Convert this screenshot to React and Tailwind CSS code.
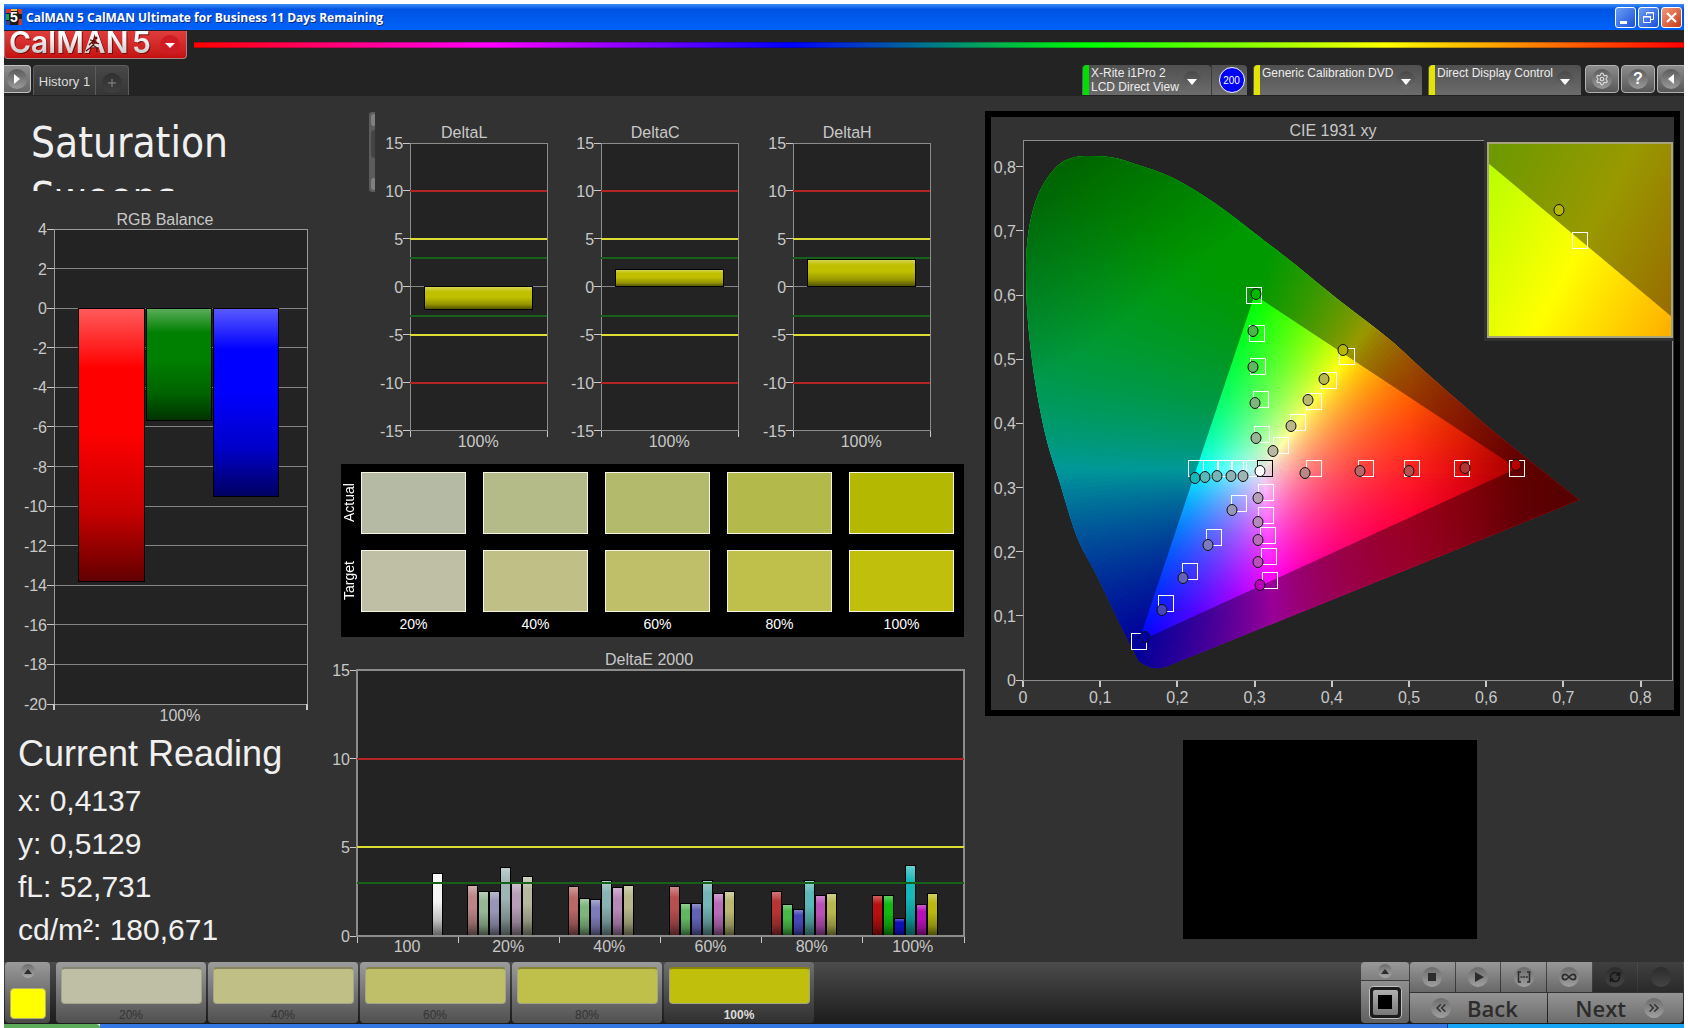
import React from 'react';
import { Settings, RefreshCw, ChevronsLeft, ChevronsRight, Infinity as InfinityIcon } from 'lucide-react';

const LEVELS = ['20%', '40%', '60%', '80%', '100%'];
const ACTUAL = ['#b5baa5', '#b4bb88', '#b3ba6b', '#b3ba4b', '#b4b900'];
const TARGET = ['#bfbfa5', '#c0bf86', '#bfbf6a', '#bfbf4c', '#c0bf0c'];

const READINGS = ['x: 0,4137', 'y: 0,5129', 'fL: 52,731', 'cd/m²: 180,671'];

const DELTA_E = [
    { level: '20%', bars: [[2.86, '#ba8686'], [2.52, '#96b696'], [2.52, '#9696b6'], [3.86, '#9fb4b4'], [3.0, '#b79fb7'], [3.35, '#b8b8a0']] },
    { level: '40%', bars: [[2.79, '#b86868'], [2.13, '#7cb67c'], [2.05, '#7c7cb8'], [3.13, '#8ab4b4'], [2.71, '#b888b8'], [2.86, '#b8b88a']] },
    { level: '60%', bars: [[2.79, '#b84f4f'], [1.85, '#62b662'], [1.85, '#6262b8'], [3.13, '#74b6b6'], [2.37, '#b86cb8'], [2.49, '#b8b870']] },
    { level: '80%', bars: [[2.52, '#b83434'], [1.79, '#46b846'], [1.49, '#4646b8'], [3.13, '#5ab8b8'], [2.3, '#b850b8'], [2.39, '#b8b850']] },
    { level: '100%', bars: [[2.3, '#b81010'], [2.3, '#10b810'], [0.98, '#1010b8'], [3.97, '#14b8b8'], [1.79, '#b810b8'], [2.39, '#b8b810']] },
];

const LIMITS = [
    [10, '#b42424'],
    [5, '#dcdc34'],
    [3, '#16601a'],
];

// gradients that every chart bar shares
const SharedDefs = () => (
    <svg className="absolute size-0" aria-hidden="true">
        <defs>
            <linearGradient id="shade" x1="0" y1="0" x2="0" y2="1">
                <stop offset="0" stopColor="#fff" stopOpacity="0.36" />
                <stop offset="0.22" stopColor="#fff" stopOpacity="0" />
                <stop offset="0.45" stopColor="#000" stopOpacity="0" />
                <stop offset="0.75" stopColor="#000" stopOpacity="0.22" />
                <stop offset="1" stopColor="#000" stopOpacity="0.62" />
            </linearGradient>
        </defs>
    </svg>
);

const Bar = ({ x, y, width, height, color }) => (
    <g shapeRendering="crispEdges">
        <rect x={x} y={y} width={width} height={height} fill={color} />
        <rect x={x} y={y} width={width} height={height} fill="url(#shade)" stroke="#000" strokeWidth="1" />
    </g>
);

const YLabel = ({ x, y, children }) => (
    <g>
        <text x={x - 7} y={y + 6} textAnchor="end" className="fill-[#c8c8c8] text-[16px]">{children}</text>
        <path d={`M${x - 7} ${y}H${x}`} stroke="#c8c8c8" shapeRendering="crispEdges" />
    </g>
);

const RgbBalance = () => {
    const top = 38;
    const unit = 475 / 24;
    const yOf = v => top + (4 - v) * unit;
    const ticks = [];
    for (let v = 4; v >= -20; v -= 2) ticks.push(v);
    return (
        <svg viewBox="0 0 337 536" className="w-full h-auto block" role="img" aria-label="RGB Balance">
            <text x="161" y="34" textAnchor="middle" className="fill-[#c8c8c8] text-[16px]">RGB Balance</text>
            <rect x="50" y={top} width="253" height="475" fill="#232323" />
            {ticks.map(v => (
                <g key={v}>
                    <path d={`M50 ${yOf(v)}H303`} stroke="#848484" shapeRendering="crispEdges" />
                    <YLabel x={50} y={yOf(v)}>{v}</YLabel>
                </g>
            ))}
            <Bar x={74} y={yOf(0)} width={66} height={13.8 * unit} color="#ff0000" />
            <Bar x={142} y={yOf(0)} width={65} height={5.7 * unit} color="#008000" />
            <Bar x={209} y={yOf(0)} width={65} height={9.5 * unit} color="#0000ff" />
            <rect x="50" y={top} width="253" height="475" fill="none" stroke="#9a9a9a" shapeRendering="crispEdges" />
            <path d="M50 513v6M303 513v6" stroke="#c8c8c8" shapeRendering="crispEdges" strokeWidth="2" />
            <text x="176" y="530" textAnchor="middle" className="fill-[#c8c8c8] text-[16px]">100%</text>
        </svg>
    );
};

const DeltaChart = ({ title, value }) => {
    const unit = 287 / 30;
    const yOf = v => 31 + (15 - v) * unit;
    return (
        <svg viewBox="0 0 191 340" className="w-full h-auto block" role="img" aria-label={title}>
            <text x="89" y="26" textAnchor="middle" className="fill-[#c8c8c8] text-[16px]">{title}</text>
            <rect x="35" y="31" width="137" height="287" fill="#232323" />
            {[15, 10, 5, 0, -5, -10, -15].map(v => <YLabel key={v} x={35} y={yOf(v)}>{v}</YLabel>)}
            <path d={`M35 ${yOf(0)}H172`} stroke="#848484" shapeRendering="crispEdges" />
            <rect x="35" y="31" width="137" height="287" fill="none" stroke="#8c8c8c" shapeRendering="crispEdges" />
            {LIMITS.map(([v, color]) => (
                <path key={v} d={`M35 ${yOf(v)}H172M35 ${yOf(-v)}H172`} stroke={color} strokeWidth="2" shapeRendering="crispEdges" />
            ))}
            <Bar x={49} y={yOf(Math.max(value, 0))} width={108} height={Math.abs(value) * unit} color="#c0c000" />
            <path d="M35 318v6M172 318v6" stroke="#c8c8c8" shapeRendering="crispEdges" />
            <text x="103" y="334" textAnchor="middle" className="fill-[#c8c8c8] text-[16px]">100%</text>
        </svg>
    );
};

const DeltaE = () => {
    const unit = 266 / 15;
    const yOf = v => 33 + (15 - v) * unit;
    const step = 607 / 6;
    return (
        <svg viewBox="0 0 623 322" className="w-full h-auto block overflow-visible" role="img" aria-label="DeltaE 2000">
            <text x="308" y="28" textAnchor="middle" className="fill-[#c8c8c8] text-[16px]">DeltaE 2000</text>
            <rect x="16" y="33" width="607" height="266" fill="#232323" />
            {[15, 10, 5, 0].map(v => <YLabel key={v} x={16} y={yOf(v)}>{v}</YLabel>)}
            <Bar x={91} y={yOf(3.52)} width={10} height={3.52 * unit} color="#f4f4f4" />
            {DELTA_E.map((group, g) => group.bars.map(([v, color], i) => (
                <Bar key={`${g}-${i}`} x={126 + Math.round(g * step) + i * 11} y={yOf(v)} width={10} height={v * unit} color={color} />
            )))}
            <rect x="16" y="33" width="607" height="266" fill="none" stroke="#8c8c8c" strokeWidth="2" shapeRendering="crispEdges" />
            {LIMITS.map(([v, color]) => (
                <path key={v} d={`M16 ${yOf(v)}H623`} stroke={color} strokeWidth="2" shapeRendering="crispEdges" />
            ))}
            {[0, 1, 2, 3, 4, 5, 6].map(i => (
                <path key={i} d={`M${16 + i * step} 300v6`} stroke="#c8c8c8" shapeRendering="crispEdges" />
            ))}
            {['100', ...LEVELS].map((label, i) => (
                <text key={label} x={66 + i * step} y="315" textAnchor="middle" className="fill-[#c8c8c8] text-[16px]">{label}</text>
            ))}
        </svg>
    );
};

// plot area of the chromaticity diagram: chart units per unit of x and y
const CIE = { left: 32, bottom: 563, sx: 772, sy: 641.5 };
const cx = x => CIE.left + x * CIE.sx;
const cy = y => CIE.bottom - y * CIE.sy;

const WHITE = [cx(0.3127), cy(0.329)];
const GAMUT = `M${cx(0.3)} ${cy(0.6)}L${cx(0.64)} ${cy(0.33)}L${cx(0.15)} ${cy(0.06)}Z`;

const LOCUS_POINTS = [
    [148, 544], [130, 509], [106, 459], [86, 420], [68, 363], [55, 320], [44, 264], [37, 205], [35, 157],
    [36, 128], [40, 101], [47, 78], [57, 60], [70, 46], [85, 40], [102, 39], [124, 41], [147, 48],
    [182, 61], [225, 87], [279, 128], [301, 145], [349, 184], [398, 222], [440, 260], [508, 319], [588, 383],
];

const smooth = pts => {
    let d = `M${pts[0][0]} ${pts[0][1]}`;
    for (let i = 0; i < pts.length - 1; i++) {
        const p0 = pts[i - 1] || pts[i];
        const p1 = pts[i];
        const p2 = pts[i + 1];
        const p3 = pts[i + 2] || p2;
        d += `C${p1[0] + (p2[0] - p0[0]) / 6} ${p1[1] + (p2[1] - p0[1]) / 6} ${p2[0] - (p3[0] - p1[0]) / 6} ${p2[1] - (p3[1] - p1[1]) / 6} ${p2[0]} ${p2[1]}`;
    }
    return d;
};

const LOCUS = `${smooth(LOCUS_POINTS)}L174 550Q160 554 148 544Z`;

// brightest sRGB mix for a chromaticity, left without gamma
const colorAt = (px, py) => {
    const x = (px - CIE.left) / CIE.sx;
    const y = Math.max((CIE.bottom - py) / CIE.sy, 0.001);
    const X = x / y;
    const Z = (1 - x - y) / y;
    const rgb = [
        3.2406 * X - 1.5372 - 0.4986 * Z,
        -0.9689 * X + 1.8758 + 0.0415 * Z,
        0.0557 * X - 0.204 + 1.057 * Z,
    ].map(c => Math.max(c, 0));
    const max = Math.max(...rgb);
    return `rgb(${rgb.map(c => Math.round((255 * c) / max)).join(',')})`;
};

const RADII = [0, 8, 16, 26, 38, 52, 68, 86, 106, 130, 160, 195, 235, 280, 330, 400];
const WEDGES = Array.from({ length: 240 }, (_, i) => {
    const a = (i * Math.PI) / 120;
    const end = a + Math.PI / 60;
    const [wx, wy] = WHITE;
    return {
        id: `w${i}`,
        d: `M${wx} ${wy}L${wx + 500 * Math.cos(a)} ${wy + 500 * Math.sin(a)}L${wx + 500 * Math.cos(end)} ${wy + 500 * Math.sin(end)}Z`,
        stops: RADII.map(r => [r / 400, colorAt(wx + r * Math.cos(a + 0.013), wy + r * Math.sin(a + 0.013))]),
    };
});

const TARGETS = [
    [263, 178], [266, 216], [267, 249], [270, 282], [271, 317],
    [356, 239], [338, 263], [323, 284], [307, 305], [290, 328],
    [323, 351], [375, 351], [421, 351], [471, 351], [526, 351],
    [205, 351], [220, 351], [234, 351], [248, 351], [260, 351],
    [275, 375], [275, 398], [277, 418], [278, 439], [279, 463],
    [248, 386], [223, 420], [199, 454], [175, 486], [148, 524],
];

const MEASURED = [
    [265, 177, '#00b800'], [262, 214, '#46b846'], [262, 250, '#62b662'], [264, 286, '#7cb67c'], [265, 321, '#96b696'],
    [352, 233, '#b8b800'], [333, 262, '#b8b850'], [317, 283, '#b8b870'], [300, 309, '#b8b88a'], [282, 334, '#b8b8a0'],
    [314, 356, '#ba8686'], [369, 354, '#b86868'], [418, 354, '#b84f4f'], [474, 351, '#b83434'], [525, 348, '#b80000'],
    [204, 361, '#14b8b8'], [214, 360, '#5ab8b8'], [226, 359, '#74b6b6'], [240, 359, '#8ab4b4'], [252, 359, '#9fb4b4'],
    [267, 381, '#b79fb7'], [267, 405, '#b888b8'], [267, 423, '#b86cb8'], [267, 445, '#b850b8'], [269, 468, '#b800b8'],
    [241, 393, '#9696b6'], [217, 428, '#7c7cb8'], [192, 461, '#6262b8'], [171, 493, '#4646b8'], [154, 520, '#0000a0'],
];

const CieInset = () => (
    <g>
        <rect x="493" y="22" width="190" height="202" fill="#323232" />
        <svg x="497" y="26" width="184" height="194" viewBox="0 0 184 194">
            <rect width="184" height="194" fill="url(#inset)" />
            <path d="M0 20L184 174V0H0Z" fill="#000" fillOpacity="0.4" />
            <ellipse cx="71" cy="67" rx="5" ry="5.500" fill="#b8b800" stroke="#111" />
            <rect x="84" y="89" width="15" height="16" fill="none" stroke="#fff" shapeRendering="crispEdges" />
        </svg>
        <rect x="497" y="26" width="184" height="194" fill="none" stroke="#a8a47c" strokeWidth="2" />
    </g>
);

const CieChart = () => (
    <svg viewBox="0 0 683 593" className="w-full h-auto block" role="img" aria-label="CIE 1931 xy">
        <defs>
            <clipPath id="locus"><path d={LOCUS} /></clipPath>
            <linearGradient id="redFade" gradientUnits="userSpaceOnUse" x1={cx(0.5)} y1="0" x2={cx(0.72)} y2="0">
                <stop offset="0" stopColor="#000" stopOpacity="0" />
                <stop offset="0.3" stopColor="#000" stopOpacity="0.12" />
                <stop offset="0.65" stopColor="#000" stopOpacity="0.36" />
                <stop offset="1" stopColor="#000" stopOpacity="0.46" />
            </linearGradient>
            <linearGradient id="greenFade" gradientUnits="userSpaceOnUse" x1={cx(0.2)} y1={cy(0.62)} x2={cx(0.08)} y2={cy(0.82)}>
                <stop offset="0" stopColor="#000" stopOpacity="0" />
                <stop offset="1" stopColor="#000" stopOpacity="0.34" />
            </linearGradient>
            <linearGradient id="inset" gradientUnits="userSpaceOnUse" x1="-21" y1="61" x2="189" y2="176">
                <stop offset="0" stopColor="#b8ff00" />
                <stop offset="0.5" stopColor="#ffff00" />
                <stop offset="1" stopColor="#ffb000" />
            </linearGradient>
            {WEDGES.map(w => (
                <radialGradient key={w.id} id={w.id} gradientUnits="userSpaceOnUse" cx={WHITE[0]} cy={WHITE[1]} r="400">
                    {w.stops.map(([offset, color]) => <stop key={offset} offset={offset} stopColor={color} />)}
                </radialGradient>
            ))}
        </defs>
        <text x="342" y="19" textAnchor="middle" className="fill-[#c8c8c8] text-[16px]">CIE 1931 xy</text>
        <rect x="32" y="23" width="649" height="540" fill="#232323" stroke="#8c8c8c" shapeRendering="crispEdges" />
        <g clipPath="url(#locus)">
            {WEDGES.map(w => <path key={w.id} d={w.d} fill={`url(#${w.id})`} />)}
            <path d={`M0 0H683V593H0Z${GAMUT}`} fill="#000" fillOpacity="0.4" fillRule="evenodd" />
            <rect width="683" height="593" fill="url(#redFade)" />
            <rect width="683" height="593" fill="url(#greenFade)" />
        </g>
        {TARGETS.map(([x, y]) => (
            <rect key={`${x}-${y}`} x={x - 8} y={y - 8} width="15" height="16" fill="none" stroke="#fff" shapeRendering="crispEdges" />
        ))}
        <rect x="266" y="343" width="15" height="16" fill="none" stroke="#000" shapeRendering="crispEdges" />
        {MEASURED.map(([x, y, color]) => (
            <ellipse key={`${x}-${y}`} cx={x} cy={y} rx="5" ry="5.500" fill={color} stroke="#111" />
        ))}
        <ellipse cx="269" cy="354" rx="5" ry="5.500" fill="#fff" stroke="#111" />
        {[0, 1, 2, 3, 4, 5, 6, 7, 8].map(i => {
            const label = i === 0 ? '0' : `0,${i}`;
            return (
                <g key={i}>
                    <YLabel x={32} y={cy(i / 10)}>{label}</YLabel>
                    <path d={`M${cx(i / 10)} 564v6`} stroke="#c8c8c8" strokeWidth="2" shapeRendering="crispEdges" />
                    <text x={cx(i / 10)} y="586" textAnchor="middle" className="fill-[#c8c8c8] text-[16px]">{label}</text>
                </g>
            );
        })}
        <CieInset />
    </svg>
);

const Swatches = () => (
    <div className="mt-[11px] flex h-[173px] bg-black pt-2 pr-2.5 text-sm text-white">
        <div className="flex w-5 flex-col items-start gap-4">
            <span className="h-[62px] rotate-180 text-center leading-4 [writing-mode:vertical-rl]">Actual</span>
            <span className="h-[62px] rotate-180 text-center leading-4 [writing-mode:vertical-rl]">Target</span>
        </div>
        <div className="grid flex-1 grid-cols-5 gap-x-[17px]">
            {LEVELS.map((level, i) => (
                <div key={level} className="flex flex-col text-center">
                    <div className="h-[62px] border border-[#f4f4e0]" style={{ background: ACTUAL[i] }} />
                    <div className="mt-4 h-[62px] border border-[#f4f4e0]" style={{ background: TARGET[i] }} />
                    <span className="mt-0.5 leading-5">{level}</span>
                </div>
            ))}
        </div>
    </div>
);

const TitleBar = () => (
    <div className="flex h-[26px] items-center bg-linear-to-b from-[#3c8cf8] via-[#0054e3] via-20% to-[#0062fa] pr-0.5 pl-0.5">
        <svg viewBox="0 0 16 16" className="size-4" aria-hidden="true">
            <rect width="16" height="16" fill="#1c1c1c" />
            <path d="M0 0h5v4H0z" fill="#e03030" />
            <path d="M5 0h6v2H5z" fill="#e8c060" />
            <path d="M11 0h5v5h-3z" fill="#d04028" />
            <path d="M0 5h3v6H0z" fill="#20a040" />
            <path d="M0 12h4v4H0z" fill="#404080" />
            <path d="M13 10h3v6h-4z" fill="#c03838" />
            <text x="8" y="13" textAnchor="middle" fill="#fff" fontSize="14" fontWeight="700">5</text>
        </svg>
        <h1 className="ml-1 flex-1 pt-px font-['Open_Sans',sans-serif] text-xs font-bold text-white [text-shadow:1px_1px_#0a2a80]">
            CalMAN 5 CalMAN Ultimate for Business 11 Days Remaining
        </h1>
        <div className="flex gap-0.5">
            <button aria-label="Minimize" className="size-[21px] rounded-[3px] border border-white bg-linear-to-br from-[#6a9cf4] to-[#1c4fd8]">
                <svg viewBox="0 0 19 19"><path d="M4 13h7v3H4z" fill="#fff" /></svg>
            </button>
            <button aria-label="Restore" className="size-[21px] rounded-[3px] border border-white bg-linear-to-br from-[#6a9cf4] to-[#1c4fd8]">
                <svg viewBox="0 0 19 19" fill="none" stroke="#fff"><path d="M7.500 7V4.500h7v7H12M7 5h8M4.500 8.500h7v6h-7zM4 9h8" /></svg>
            </button>
            <button aria-label="Close" className="size-[21px] rounded-[3px] border border-white bg-linear-to-br from-[#f09878] to-[#c83410]">
                <svg viewBox="0 0 19 19"><path d="M5 5l9 9M14 5l-9 9" stroke="#fff" strokeWidth="2.200" /></svg>
            </button>
        </div>
    </div>
);

const Logo = () => (
    <button aria-label="CalMAN 5 menu" className="h-7 w-[183px] rounded-b-[4px] border border-t-0 border-[#a88080] bg-linear-to-b from-[#e03c3c] to-[#c41010]">
        <svg viewBox="0 0 181 27" className="block size-full">
            <defs>
                <linearGradient id="chrome" x1="0" y1="0" x2="0" y2="1">
                    <stop offset="0.3" stopColor="#fff" />
                    <stop offset="1" stopColor="#b8b8b8" />
                </linearGradient>
            </defs>
            <g className="font-['Inter',sans-serif] drop-shadow-[1px_1px_0_#7a0c0c]" fontSize="30" fontWeight="600">
                <text x="4" y="22" fill="url(#chrome)">CalMAN</text>
                <text x="127" y="22" fill="url(#chrome)">5</text>
            </g>
            <path d="M85 9l5 1-2 5M88 10l-4 4M88 14l-3 3-4 3M88 14l4 3 0 4M90 11l4 2" fill="none" stroke="#4a1010" strokeWidth="1.200" />
            <circle cx="91" cy="7" r="1.500" fill="#4a1010" />
            <circle cx="165" cy="14" r="10" fill="#cf1c24" />
            <path d="M160 12h10l-5 5z" fill="#fff" />
        </svg>
    </button>
);

const Dial = ({ children, className = 'size-5 from-[#5c5c5c] to-[#9a9a9a]' }) => (
    <span className={`flex shrink-0 items-center justify-center rounded-full bg-linear-to-b ${className}`}>{children}</span>
);

const DropArrow = () => (
    <Dial className="size-[18px] from-[#484848] to-[#6c6c6c]">
        <svg viewBox="0 0 10 6" className="mt-1 h-1.5 w-2.5"><path d="M0 0h10L5 6z" fill="#fff" /></svg>
    </Dial>
);

const DeviceMenu = ({ lines, stripe, className }) => (
    <button className={`flex h-[30px] items-start rounded-t-[4px] bg-linear-to-b from-[#505050] to-[#6c6c6c] pl-px text-left text-xs leading-[14px] text-[#ececec] ${className}`}>
        <span className={`h-full w-1.5 rounded-tl-[4px] ${stripe}`} />
        <span className="ml-0.5 flex-1 pt-px whitespace-nowrap">
            {lines.map(line => <span key={line} className="block">{line}</span>)}
        </span>
        <span className="mt-1.5"><DropArrow /></span>
    </button>
);

const Header = () => (
    <header className="flex h-[66px] flex-col bg-[#232323]">
        <div className="flex items-start pt-px">
            <Logo />
            <div className="mt-[11px] ml-[7px] h-1.5 flex-1 border-y border-black/25 bg-[linear-gradient(to_right,#f00,#f0f,#00f,#0f0,#ff0,#f00)]" />
        </div>
        <div className="mt-1.5 flex items-start">
            <button aria-label="Expand left panel" className="flex h-7 w-[27px] items-center justify-center rounded-r-[4px] border border-l-0 border-[#c0c0c0] bg-linear-to-b from-[#8c8c8c] to-[#686868]">
                <Dial>
                    <svg viewBox="0 0 6 10" className="h-2.5 w-1.5"><path d="M0 0v10l6-5z" fill="#fff" /></svg>
                </Dial>
            </button>
            <div className="ml-0.5 flex h-[30px] w-24 rounded-t-[4px] border border-b-0 border-[#5c5c5c] bg-linear-to-b from-[#484848] to-[#363636]">
                <button className="w-[62px] border-r border-[#5c5c5c] pt-0.5 text-[13px] text-[#dcdcdc]">History 1</button>
                <button aria-label="Add history" className="flex flex-1 items-center justify-center pt-1">
                    <Dial className="size-5 from-[#303030] to-[#404040]">
                        <svg viewBox="0 0 8 8" className="size-2"><path d="M4 0v8M0 4h8" stroke="#8c8c8c" /></svg>
                    </Dial>
                </button>
            </div>
            <div className="ml-auto flex items-start">
                <DeviceMenu lines={['X-Rite i1Pro 2', 'LCD Direct View']} stripe="bg-[#00e000]" className="w-[129px] pr-2.5" />
                <div className="flex h-[30px] w-9 items-center justify-center rounded-tr-[4px] border-l border-[#3c3c3c] bg-linear-to-b from-[#505050] to-[#6c6c6c] pl-1">
                    <span className="flex size-[26px] items-center justify-center rounded-full border border-white bg-[#0000ff] text-[10px] text-white">200</span>
                </div>
                <div className="ml-1.5 flex gap-1.5">
                    <DeviceMenu lines={['Generic Calibration DVD']} stripe="bg-[#e4e400]" className="w-[169px] pr-[7px]" />
                    <DeviceMenu lines={['Direct Display Control']} stripe="bg-[#e4e400]" className="w-[153px] pr-[7px]" />
                </div>
                <div className="ml-1 flex gap-0.5">
                    <button aria-label="Settings" className="flex h-7 w-[34px] items-center justify-center rounded-[4px] border border-[#b0b0b0] bg-linear-to-b from-[#8c8c8c] to-[#585858]">
                        <Dial><Settings size={14} color="#d8d8d8" strokeWidth={2} /></Dial>
                    </button>
                    <button aria-label="Help" className="flex h-7 w-[34px] items-center justify-center rounded-[4px] border border-[#b0b0b0] bg-linear-to-b from-[#8c8c8c] to-[#585858]">
                        <Dial><span className="text-base font-bold text-white">?</span></Dial>
                    </button>
                    <button aria-label="Expand right panel" className="flex h-7 w-[27px] items-center justify-center rounded-l-[4px] border border-r-0 border-[#b0b0b0] bg-linear-to-b from-[#8c8c8c] to-[#585858]">
                        <Dial>
                            <svg viewBox="0 0 6 10" className="h-2.5 w-1.5"><path d="M6 0v10L0 5z" fill="#fff" /></svg>
                        </Dial>
                    </button>
                </div>
            </div>
        </div>
    </header>
);

const UpDial = () => (
    <Dial className="size-3.5 from-[#6c6c6c] to-[#a8a8a8]">
        <svg viewBox="0 0 8 5" className="h-[5px] w-2"><path d="M0 5h8L4 0z" fill="#2c2c2c" /></svg>
    </Dial>
);

const PatternBar = () => (
    <div className="flex gap-1.5">
        <button aria-label="Pattern list" className="flex h-[61px] w-[45px] flex-col items-center rounded-[4px] bg-linear-to-b from-[#9a9a9a] to-[#4a4a4a] pt-0.5">
            <UpDial />
            <span className="mt-2.5 h-[31px] w-9 rounded-[4px] border border-[#b0b070] bg-[#ffff00]" />
        </button>
        <div className="flex gap-0.5">
            {LEVELS.map((level, i) => {
                const active = i === LEVELS.length - 1;
                return (
                    <button
                        key={level}
                        className={`flex h-[61px] w-[150px] flex-col items-center rounded-[4px] bg-linear-to-b pt-[5px] text-xs ${active ? 'from-[#707070] to-[#303030] font-bold text-[#dcdcdc]' : 'from-[#9c9c9c] to-[#505050] text-[#343434]'}`}
                    >
                        <span
                            className="h-[37px] w-[141px] rounded-[4px] border border-t-2 border-[#a4a48c] border-t-black/30"
                            style={{ background: TARGET[i] }}
                        />
                        <span className="mt-1 leading-[14px]">{level}</span>
                    </button>
                );
            })}
        </div>
    </div>
);

const ToolButton = ({ label, dark, children }) => (
    <button
        aria-label={label}
        className={`flex h-[30px] flex-1 items-center justify-center bg-linear-to-b ${dark ? 'from-[#404040] to-[#2a2a2a]' : 'from-[#989898] to-[#686868]'}`}
    >
        <Dial className={dark ? 'size-5 from-[#2c2c2c] to-[#444444]' : 'size-5 from-[#6c6c6c] to-[#a0a0a0]'}>{children}</Dial>
    </button>
);

const Transport = () => (
    <div className="ml-auto flex gap-px pr-px">
        <div className="flex w-12 flex-col gap-px">
            <button aria-label="Window options" className="flex h-[18px] items-center justify-center rounded-t-[4px] bg-linear-to-b from-[#989898] to-[#808080]">
                <UpDial />
            </button>
            <button aria-label="Pattern window" className="flex h-[42px] items-center justify-center rounded-b-[4px] bg-linear-to-b from-[#909090] to-[#606060]">
                <span className="flex size-[33px] items-center justify-center rounded-[4px] border border-[#c0c0c0] bg-[#1c1c1c] p-[3px]">
                    <span className="flex size-full items-center justify-center rounded-[2px] bg-linear-to-b from-[#b0b0b0] to-[#787878]">
                        <span className="size-3.5 bg-black" />
                    </span>
                </span>
            </button>
        </div>
        <div className="flex w-[273px] flex-col gap-px">
            <div className="flex gap-px overflow-hidden rounded-t-[4px]">
                <ToolButton label="Stop"><span className="size-2 bg-[#2c2c2c]" /></ToolButton>
                <ToolButton label="Play">
                    <svg viewBox="0 0 9 10" className="ml-0.5 h-2.5 w-[9px]"><path d="M0 0v10l9-5z" fill="#2c2c2c" /></svg>
                </ToolButton>
                <ToolButton label="Read series">
                    <svg viewBox="0 0 14 12" className="h-3 w-3.5" fill="none" stroke="#2c2c2c">
                        <path d="M4 1H1.500v10H4M10 1h2.500v10H10" strokeWidth="1.600" />
                        <path d="M3.500 6h2M6.200 6h1.800M8.800 6h2" strokeWidth="1.600" />
                    </svg>
                </ToolButton>
                <ToolButton label="Read continuously"><InfinityIcon size={16} color="#2c2c2c" strokeWidth={2.5} /></ToolButton>
                <ToolButton label="Repeat" dark><RefreshCw size={12} color="#161616" strokeWidth={3} /></ToolButton>
                <ToolButton label="Record" dark />
            </div>
            <div className="flex gap-px overflow-hidden rounded-b-[4px] font-['Open_Sans',sans-serif] text-[22px] font-semibold text-[#2c2c2c]">
                <button className="flex h-[30px] flex-1 items-center gap-4 bg-linear-to-b from-[#949494] to-[#6c6c6c] pl-[21px]">
                    <Dial className="size-5 from-[#6c6c6c] to-[#a0a0a0]"><ChevronsLeft size={16} /></Dial>
                    Back
                </button>
                <button className="flex h-[30px] flex-1 items-center justify-end gap-[18px] bg-linear-to-b from-[#949494] to-[#6c6c6c] pr-[19px]">
                    Next
                    <Dial className="size-5 from-[#6c6c6c] to-[#a0a0a0]"><ChevronsRight size={16} /></Dial>
                </button>
            </div>
        </div>
    </div>
);

const App = () => (
    <div className="flex min-h-screen flex-col bg-white px-1 pt-1 font-['Liberation_Sans',Arial,sans-serif]">
        <SharedDefs />
        <TitleBar />
        <Header />
        <main className="grid flex-1 grid-cols-[337fr_644fr_699fr] items-start bg-[#323232]">
            <section>
                <div className="mt-[19px] h-[76px] overflow-hidden pl-[27px]">
                    <h2 className="w-56 font-['DejaVu_Sans_Condensed','DejaVu_Sans',sans-serif] text-[42px] leading-[55px] text-[#f0f0f0]">
                        Saturation Sweeps
                    </h2>
                </div>
                <RgbBalance />
                <div className="pl-3.5 pt-[5px] leading-[43px] text-[#f0f0f0]">
                    <h2 className="text-4xl leading-[43px]">Current Reading</h2>
                    <ul className="mt-1 text-3xl leading-[43px]">
                        {READINGS.map(r => <li key={r}>{r}</li>)}
                    </ul>
                </div>
            </section>
            <section className="pt-4">
                <div className="flex items-start pr-9 pl-7">
                    <div className="flex h-20 w-1.5 flex-col justify-between overflow-hidden rounded-l-[3px] bg-[#5c5c5c] py-0.5 pl-0.5">
                        <span className="h-3 rounded-l-[3px] bg-[#808080]" />
                        <span className="mb-4 h-7 rounded-l-[4px] bg-[#444]" />
                        <span className="h-3 rounded-l-[3px] bg-[#808080]" />
                    </div>
                    <div className="grid flex-1 grid-cols-3">
                        <DeltaChart title="DeltaL" value={-2.4} />
                        <DeltaChart title="DeltaC" value={1.8} />
                        <DeltaChart title="DeltaH" value={2.9} />
                    </div>
                </div>
                <div className="pr-[21px]">
                    <Swatches />
                    <DeltaE />
                </div>
            </section>
            <section className="pt-[15px] pr-1">
                <div className="border-[6px] border-black">
                    <CieChart />
                </div>
                <div className="mt-6 flex justify-center pr-1.5">
                    <div className="h-[199px] w-[294px] bg-black" />
                </div>
            </section>
        </main>
        <footer>
            <div className="flex h-[62px] bg-linear-to-b from-[#4c4c4c] to-[#1c1c1c] pl-px">
                <PatternBar />
                <Transport />
            </div>
            <div className="flex h-1">
                <div className="w-24 rounded-tr-[4px] bg-[#5cac5c]" />
                <div className="flex-1 bg-[#3478e4]" />
                <div className="w-[237px] border-l border-[#0c3c90] bg-[#18a4f4]" />
            </div>
        </footer>
    </div>
);

export default App;
